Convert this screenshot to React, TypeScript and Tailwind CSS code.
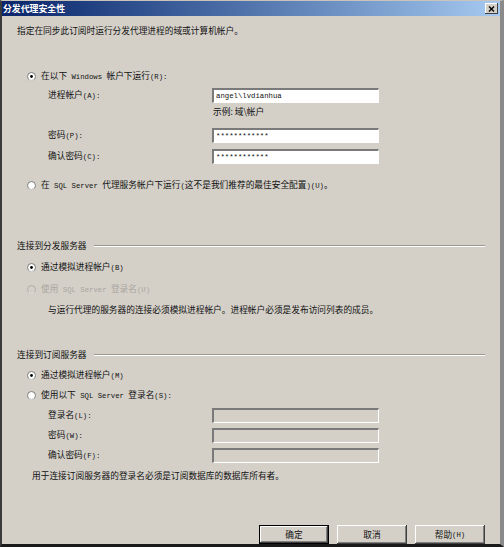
import React from "react";

const cjk = "font-['Noto_Sans_CJK_SC','Noto_Sans',sans-serif]";

// SimSun-like look: ASCII runs get a narrow mono face, CJK keeps full width
const T = ({ s }: { s: string }) => (
  <>
    {s.split(/([\x20-\x7e]+)/).map((part, i) =>
      /^[\x20-\x7e]+$/.test(part) ? (
        <span key={i} className="font-['Liberation_Mono',monospace] text-[7.3px] whitespace-pre">
          {part}
        </span>
      ) : (
        <span key={i}>{part}</span>
      )
    )}
  </>
);

const Radio = ({ checked, disabled }: { checked?: boolean; disabled?: boolean }) => (
  <svg width="9" height="9" viewBox="0 0 9 9" className="shrink-0">
    <circle cx="4.5" cy="4.5" r="4" fill={disabled ? "#d4d0c8" : "#fff"} stroke={disabled ? "#b0aca4" : "#7a7a7a"} strokeWidth="1" />
    <path d="M1.7 7.3 A4 4 0 0 0 7.3 7.3" fill="none" stroke="#eeece8" strokeWidth="1" />
    {checked && <circle cx="4.5" cy="4.5" r="1.4" fill="#000" />}
  </svg>
);

const RadioRow = ({
  label,
  checked,
  disabled,
  mt,
}: {
  label: string;
  checked?: boolean;
  disabled?: boolean;
  mt: string;
}) => (
  <div className={`${mt} h-[12px] flex items-center gap-[5px] pl-[25px]`}>
    <Radio checked={checked} disabled={disabled} />
    <span className={disabled ? "text-[#a9a59e]" : "text-[#111]"}>
      <T s={label} />
    </span>
  </div>
);

const Field = ({
  label,
  value,
  disabled,
  mt,
}: {
  label: string;
  value?: string;
  disabled?: boolean;
  mt: string;
}) => (
  <div className={`${mt} h-[15px] flex items-center pl-[46px]`}>
    <span className="w-[164px] text-[#111]">
      <T s={label} />
    </span>
    <div
      className={`w-[167px] h-[15px] flex items-center pl-[2px] border-t-2 border-l-2 border-t-[#7a7a7a] border-l-[#7a7a7a] border-b border-r border-b-white border-r-white ${
        disabled ? "bg-[#d4d0c8]" : "bg-white"
      }`}
    >
      {value && (
        <span className="text-[#111] leading-none">
          <T s={value} />
        </span>
      )}
    </div>
  </div>
);

const Section = ({ label, mt }: { label: string; mt: string }) => (
  <div className={`${mt} h-[12px] flex items-center pl-[15px] pr-[15px]`}>
    <span className="text-[#111]">{label}</span>
    <div className="flex-1 ml-[7px] border-t border-t-[#9a9690] border-b border-b-white" />
  </div>
);

const Button = ({ label, isDefault }: { label: string; isDefault?: boolean }) => (
  <div
    className={`w-[70px] h-[19px] flex items-center justify-center bg-[#d4d0c8] text-[#111] ${
      isDefault
        ? "border border-black shadow-[inset_-1px_-1px_#404040,inset_1px_1px_#fff,inset_-2px_-2px_#808080]"
        : "shadow-[inset_-1px_-1px_#404040,inset_1px_1px_#fff,inset_-2px_-2px_#808080]"
    }`}
  >
    <T s={label} />
  </div>
);

export default function App() {
  return (
    <div
      className={`w-[504px] h-[547px] flex flex-col bg-[#d4d0c8] border-l-2 border-l-[#3a3a3a] border-r-4 border-r-[#8a8a8a] border-b-[3px] border-b-[#1a1a1a] border-t border-t-[#c8c4bc] text-[8.7px] leading-[12px] ${cjk}`}
    >
      <div className="h-[15px] flex items-center justify-between pl-[1px] pr-[2px] bg-gradient-to-r from-[#0a246a] to-[#a6caf0]">
        <span className="text-white font-bold text-[8.9px]">分发代理安全性</span>
        <div className="w-[13px] h-[11px] bg-[#d4d0c8] flex items-center justify-center shadow-[inset_-1px_-1px_#404040,inset_1px_1px_#fff]">
          <svg width="7" height="6" viewBox="0 0 7 6">
            <path d="M1 0.5 L6 5.5 M6 0.5 L1 5.5" stroke="#000" strokeWidth="1.4" />
          </svg>
        </div>
      </div>

      <div className="mt-[9px] h-[12px] pl-[15px] text-[#111]">
        指定在同步此订阅时运行分发代理进程的域或计算机帐户。
      </div>

      <RadioRow mt="mt-[33px]" label="在以下 Windows 帐户下运行(R):" checked />
      <Field mt="mt-[6px]" label="进程帐户(A):" value="angel\lvdianhua" />
      <div className="mt-[3px] h-[12px] pl-[211px] text-[#111]">示例: 域\帐户</div>
      <Field mt="mt-[10px]" label="密码(P):" value="************" />
      <Field mt="mt-[6px]" label="确认密码(C):" value="************" />
      <RadioRow mt="mt-[15px]" label="在 SQL Server 代理服务帐户下运行(这不是我们推荐的最佳安全配置)(U)。" />

      <Section mt="mt-[49px]" label="连接到分发服务器" />
      <RadioRow mt="mt-[9px]" label="通过模拟进程帐户(B)" checked />
      <RadioRow mt="mt-[10px]" label="使用 SQL Server 登录名(U)" disabled />
      <div className="mt-[9px] h-[12px] pl-[46px] text-[#111]">
        与运行代理的服务器的连接必须模拟进程帐户。进程帐户必须是发布访问列表的成员。
      </div>

      <Section mt="mt-[33px]" label="连接到订阅服务器" />
      <RadioRow mt="mt-[8px]" label="通过模拟进程帐户(M)" checked />
      <RadioRow mt="mt-[8px]" label="使用以下 SQL Server 登录名(S):" />
      <Field mt="mt-[7px]" label="登录名(L):" disabled />
      <Field mt="mt-[5px]" label="密码(W):" disabled />
      <Field mt="mt-[5px]" label="确认密码(F):" disabled />
      <div className="mt-[7px] h-[12px] pl-[30px] text-[#111]">
        用于连接订阅服务器的登录名必须是订阅数据库的数据库所有者。
      </div>

      <div className="mt-auto flex gap-[8px] pl-[257px]">
        <Button label="确定" isDefault />
        <Button label="取消" />
        <Button label="帮助(H)" />
      </div>
    </div>
  );
}
